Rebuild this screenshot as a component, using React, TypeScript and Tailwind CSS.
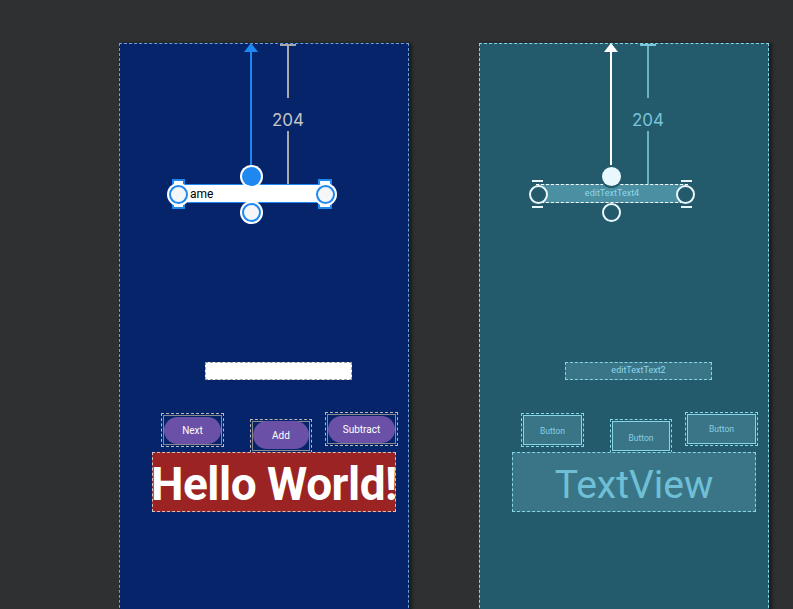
import React from "react";

function Dimension({ line, tick, text }: { line: string; tick: string; text: string }) {
  return (
    <div className="absolute left-[138px] top-0 w-[60px] h-[142px] flex flex-col items-center">
      <div className={`w-[16px] h-[2px] shrink-0 ${tick}`} />
      <div className={`w-[2px] h-[52px] shrink-0 ${line}`} />
      <div className={`h-[33px] shrink-0 pt-[11px] leading-[22px] text-[17px] font-['Inter',sans-serif] ${text}`}>204</div>
      <div className={`w-[2px] h-[53px] shrink-0 ${line}`} />
      <div className={`w-[17px] h-[2px] shrink-0 ${tick}`} />
    </div>
  );
}

function DesignPanel() {
  return (
    <div className="relative w-[290px] h-[600px] shrink-0 border border-dashed border-[#6f9fd8] bg-[#05246a] shadow-[3px_0_3px_rgba(0,0,0,0.45)] font-['Roboto',sans-serif]">
      {/* constraint arrow */}
      <div className="absolute left-[130px] top-[7px] w-[2px] h-[114px] bg-[#1e88f0]" />
      <svg className="absolute left-[124px] top-[-1px]" width="14" height="9" viewBox="0 0 14 9">
        <polygon points="7,0 14,9 0,9" fill="#1e88f0" />
      </svg>
      <Dimension line="bg-[#a8a8a8]" tick="bg-[#a8a8a8]" text="text-[#c4c4c4]" />

      {/* selected edit text */}
      <div className="absolute left-[52px] top-[135px] w-[13px] h-[30px] bg-white border-2 border-[#1e88f0]" />
      <div className="absolute left-[198px] top-[135px] w-[14px] h-[30px] bg-white border-2 border-[#1e88f0]" />
      <div className="absolute left-[52px] top-[140px] w-[160px] h-[19px] bg-white border border-[#1e88f0] flex items-center pl-[17px] pt-[1px] text-[12px] text-black leading-none">
        ame
      </div>
      <div className="absolute left-[47px] top-[139px] w-[23px] h-[23px] rounded-full bg-white p-[2px]">
        <div className="w-full h-full rounded-full border-2 border-[#1e88f0] bg-[#f4f6f8]" />
      </div>
      <div className="absolute left-[194px] top-[139px] w-[23px] h-[23px] rounded-full bg-white p-[2px]">
        <div className="w-full h-full rounded-full border-2 border-[#1e88f0] bg-[#f4f6f8]" />
      </div>
      <div className="absolute left-[120px] top-[121px] w-[23px] h-[23px] rounded-full bg-white p-[2px]">
        <div className="w-full h-full rounded-full bg-[#1e88f0]" />
      </div>
      <div className="absolute left-[120px] top-[157px] w-[23px] h-[23px] rounded-full bg-white p-[2px]">
        <div className="w-full h-full rounded-full border-2 border-[#1e88f0] bg-[#f4f6f8]" />
      </div>

      {/* second edit text */}
      <div className="absolute left-[85px] top-[318px] w-[147px] h-[18px] bg-white border border-dashed border-[#a0a0a0]" />

      {/* buttons */}
      <div className="absolute left-[41px] top-[369px] w-[63px] h-[34px] border border-dashed border-[#b8b8b8] p-px">
        <div className="w-full h-full border border-[#8a8a8a] flex items-center justify-center">
          <div className="w-[61px] h-[27px] rounded-full bg-[#6a51a7] flex items-center justify-center text-white text-[10px] font-normal">
            Next
          </div>
        </div>
      </div>
      <div className="absolute left-[130px] top-[375px] w-[62px] h-[34px] border border-dashed border-[#b8b8b8] p-px">
        <div className="w-full h-full border border-[#8a8a8a] flex items-end justify-center pb-[1px]">
          <div className="w-[60px] h-[28px] rounded-full bg-[#6a51a7] flex items-center justify-center text-white text-[10px] font-normal">
            Add
          </div>
        </div>
      </div>
      <div className="absolute left-[205px] top-[368px] w-[73px] h-[34px] border border-dashed border-[#b8b8b8] p-px">
        <div className="w-full h-full border border-[#8a8a8a] flex items-center justify-center">
          <div className="w-[70px] h-[27px] rounded-full bg-[#6a51a7] flex items-center justify-center text-white text-[10px] font-normal">
            Subtract
          </div>
        </div>
      </div>

      {/* hello world */}
      <div className="absolute left-[32px] top-[408px] w-[244px] h-[60px] bg-[#9b2323] border border-dashed border-[#d0c0c0] overflow-hidden flex items-center justify-center pt-[3px]">
        <span className="text-white font-bold text-[46px] leading-none whitespace-nowrap tracking-[-0.5px]">
          Hello World!
        </span>
      </div>
    </div>
  );
}

function BlueprintPanel() {
  return (
    <div className="relative w-[290px] h-[600px] shrink-0 border border-dashed border-[#86d6e8] bg-[#235b6d] shadow-[3px_0_3px_rgba(0,0,0,0.45)] font-['Roboto',sans-serif]">
      {/* constraint arrow */}
      <div className="absolute left-[130px] top-[7px] w-[2px] h-[118px] bg-white" />
      <svg className="absolute left-[124px] top-[-1px]" width="14" height="9" viewBox="0 0 14 9">
        <polygon points="7,0 14,9 0,9" fill="#ffffff" />
      </svg>
      <Dimension line="bg-[#6ab3c6]" tick="bg-[#7cc6d8]" text="text-[#78c4d8]" />

      {/* edit text */}
      <div className="absolute left-[56px] top-[140px] w-[152px] h-[19px] bg-[#4b8fa2] border-y border-dashed border-white flex items-center justify-center text-[9px] text-[#8fd6ea]">
        editTextText4
      </div>
      {/* brackets */}
      <div className="absolute left-[52px] top-[136px] w-[11px] h-[2px] bg-[#e8f6fa]" />
      <div className="absolute left-[52px] top-[162px] w-[11px] h-[2px] bg-[#e8f6fa]" />
      <div className="absolute left-[201px] top-[136px] w-[11px] h-[2px] bg-[#e8f6fa]" />
      <div className="absolute left-[201px] top-[162px] w-[11px] h-[2px] bg-[#e8f6fa]" />
      <div className="absolute left-[49px] top-[141px] w-[19px] h-[19px] rounded-full bg-[#235b6d] border-2 border-[#eaf7fb]" />
      <div className="absolute left-[196px] top-[141px] w-[19px] h-[19px] rounded-full bg-[#235b6d] border-2 border-[#eaf7fb]" />
      <div className="absolute left-[122px] top-[123px] w-[19px] h-[19px] rounded-full bg-[#e8f8fd] ring-2 ring-[#235b6d]" />
      <div className="absolute left-[122px] top-[159px] w-[19px] h-[19px] rounded-full bg-[#235b6d] border-2 border-[#eaf7fb]" />

      {/* second edit text */}
      <div className="absolute left-[85px] top-[318px] w-[147px] h-[18px] bg-[#3a7587] border border-dashed border-[#86d6e8] flex items-center justify-center text-[9px] text-[#8fd6ea]">
        editTextText2
      </div>

      {/* buttons */}
      <div className="absolute left-[41px] top-[369px] w-[63px] h-[34px] border border-dashed border-[#86d6e8] p-px">
        <div className="w-full h-full border border-[#86d6e8] bg-[#3a7587] flex items-center justify-center text-[8.5px] text-[#85cde2] pt-[2px]">
          Button
        </div>
      </div>
      <div className="absolute left-[130px] top-[375px] w-[62px] h-[34px] border border-dashed border-[#86d6e8] p-px">
        <div className="w-full h-full border border-[#86d6e8] bg-[#3a7587] flex items-center justify-center text-[8.5px] text-[#85cde2] pt-[4px]">
          Button
        </div>
      </div>
      <div className="absolute left-[205px] top-[368px] w-[73px] h-[34px] border border-dashed border-[#86d6e8] p-px">
        <div className="w-full h-full border border-[#86d6e8] bg-[#3a7587] flex items-center justify-center text-[8.5px] text-[#85cde2]">
          Button
        </div>
      </div>

      {/* text view */}
      <div className="absolute left-[32px] top-[408px] w-[244px] h-[60px] bg-[#3a7587] border border-dashed border-[#86d6e8] flex items-center justify-center pt-[6px]">
        <span className="text-[#6fc0d6] text-[39px] leading-none font-normal whitespace-nowrap">TextView</span>
      </div>
    </div>
  );
}

export default function App() {
  return (
    <div className="w-[793px] h-[609px] overflow-hidden bg-[#2f3032] flex items-start pl-[119px] pt-[43px] gap-[70px]">
      <DesignPanel />
      <BlueprintPanel />
    </div>
  );
}
